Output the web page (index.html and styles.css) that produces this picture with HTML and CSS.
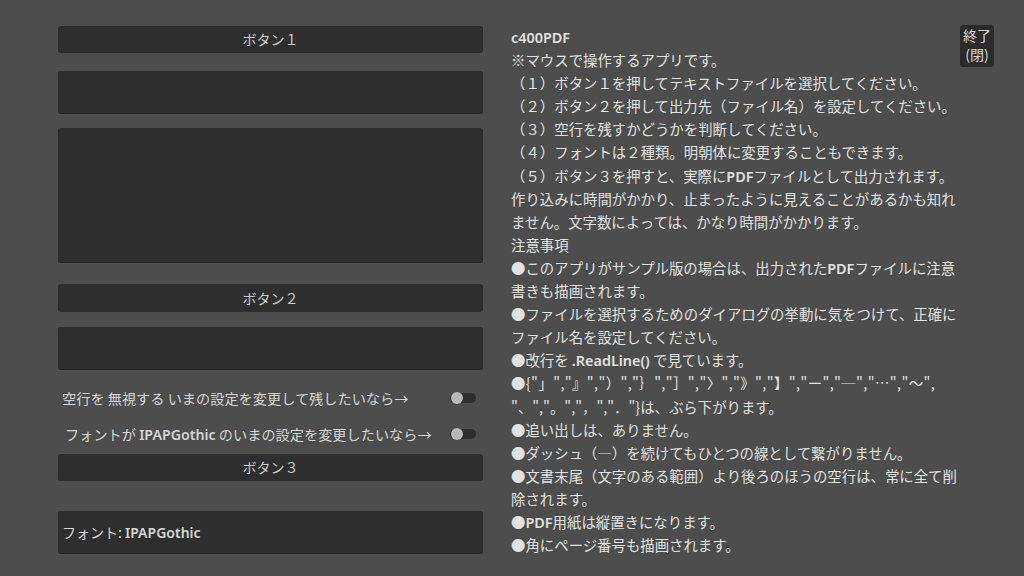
FILE: index.html
```html
<!DOCTYPE html>
<html lang="ja">
<head>
  <meta charset="UTF-8">
  <title>c400PDF</title>
  <link rel="stylesheet" href="styles.css">
</head>
<body>
  <div class="app">
    <div class="left-col">
      <div class="btn btn1">ボタン１</div>
      <div class="field field-in1"></div>
      <div class="field field-area"></div>
      <div class="btn btn2">ボタン２</div>
      <div class="field field-in2"></div>
      <div class="toggle-row row1">
        <span class="toggle-label">空行を 無視する いまの設定を変更して残したいなら→</span>
        <span class="switch"><span class="knob"></span></span>
      </div>
      <div class="toggle-row row2">
        <span class="toggle-label label2">フォントが <span class="en">IPAPGothic</span> のいまの設定を変更したいなら→</span>
        <span class="switch"><span class="knob"></span></span>
      </div>
      <div class="btn btn3">ボタン３</div>
      <div class="field field-font">フォント: <span class="en">IPAPGothic</span></div>
    </div>

    <div class="help">
      <div><span class="en">c400PDF</span></div>
      <div>※マウスで操作するアプリです。</div>
      <div>（１）ボタン１を押してテキストファイルを選択してください。</div>
      <div>（２）ボタン２を押して出力先（ファイル名）を設定してください。</div>
      <div>（３）空行を残すかどうかを判断してください。</div>
      <div>（４）フォントは２種類。明朝体に変更することもできます。</div>
      <div>（５）ボタン３を押すと、実際に<span class="en">PDF</span>ファイルとして出力されます。<br>作り込みに時間がかかり、止まったように見えることがあるかも知れ<br>ません。文字数によっては、かなり時間がかかります。</div>
      <div>注意事項</div>
      <div>●このアプリがサンプル版の場合は、出力された<span class="en">PDF</span>ファイルに注意<br>書きも描画されます。</div>
      <div>●ファイルを選択するためのダイアログの挙動に気をつけて、正確に<br>ファイル名を設定してください。</div>
      <div>●改行を <span class="en">.ReadLine()</span> で見ています。</div>
      <div><span class="spread">●{"」","』","）","｝","］","〉","》","】","ー","─","…","～",</span><br>"、","。","，","．"}は、ぶら下がります。</div>
      <div>●追い出しは、ありません。</div>
      <div>●ダッシュ（―）を続けてもひとつの線として繋がりません。</div>
      <div>●文書末尾（文字のある範囲）より後ろのほうの空行は、常に全て削<br>除されます。</div>
      <div>●<span class="en">PDF</span>用紙は縦置きになります。</div>
      <div>●角にページ番号も描画されます。</div>
    </div>

    <div class="quit">終了<br>(閉)</div>
  </div>
</body>
</html>
```

FILE: styles.css
```css
html, body {
  margin: 0;
  padding: 0;
  width: 1024px;
  height: 576px;
  background-color: #4d4d4d;
  overflow: hidden;
  font-family: "Noto Sans CJK JP", sans-serif;
  font-size: 14px;
  color: #dedede;
}
.en {
  font-family: "Noto Sans", "Noto Sans CJK JP", sans-serif;
  font-weight: 600;
}
.app {
  display: flex;
  align-items: flex-start;
}
.left-col {
  display: flex;
  flex-direction: column;
  width: 426px;
  margin-left: 58px;
  padding-top: 26px;
}
.btn {
  height: 27px;
  line-height: 27px;
  text-align: center;
  background-color: #2e2e2e;
  border-radius: 3px;
  color: #c9c9c9;
}
.field {
  background-color: #2e2e2e;
  border-radius: 3px;
  box-shadow: 0 1px 0 #242424;
}
.field-in1 {
  height: 42px;
  margin-top: 18px;
}
.field-area {
  height: 134px;
  margin-top: 15px;
}
.btn2 {
  height: 28px;
  line-height: 28px;
  margin-top: 22px;
}
.field-in2 {
  height: 42px;
  margin-top: 15px;
}
.toggle-row {
  display: flex;
  align-items: center;
  justify-content: space-between;
  height: 28px;
  padding-right: 7px;
  font-size: 14.2px;
  color: #d6d6d6;
}
.row1 {
  margin-top: 15px;
}
.row2 {
  margin-top: 8px;
}
.toggle-label {
  padding-left: 4px;
}
.label2 {
  padding-left: 7px;
}
.switch {
  display: flex;
  align-items: center;
  width: 26px;
  height: 10px;
  border-radius: 5px;
  background-color: #2e2e2e;
}
.knob {
  width: 12px;
  height: 12px;
  border-radius: 50%;
  background-color: #b8b8b8;
  margin-left: 1px;
}
.btn3 {
  margin-top: 6px;
}
.field-font {
  height: 42px;
  line-height: 42px;
  margin-top: 30px;
  padding-left: 4px;
  color: #d6d6d6;
}
.help {
  margin-left: 28px;
  padding-top: 25px;
  width: 450px;
  white-space: nowrap;
  font-size: 14.4px;
  line-height: 23.1px;
  color: #e2e2e2;
}
.help .en {
  line-height: 1;
}
.spread {
  letter-spacing: 0.4px;
}
.quit {
  margin-left: auto;
  margin-right: 30px;
  margin-top: 25px;
  width: 34px;
  height: 42px;
  padding-top: 1px;
  box-sizing: border-box;
  background-color: #2b2b2b;
  border-radius: 3px;
  text-align: center;
  line-height: 19px;
  color: #d8d8d8;
}
```
